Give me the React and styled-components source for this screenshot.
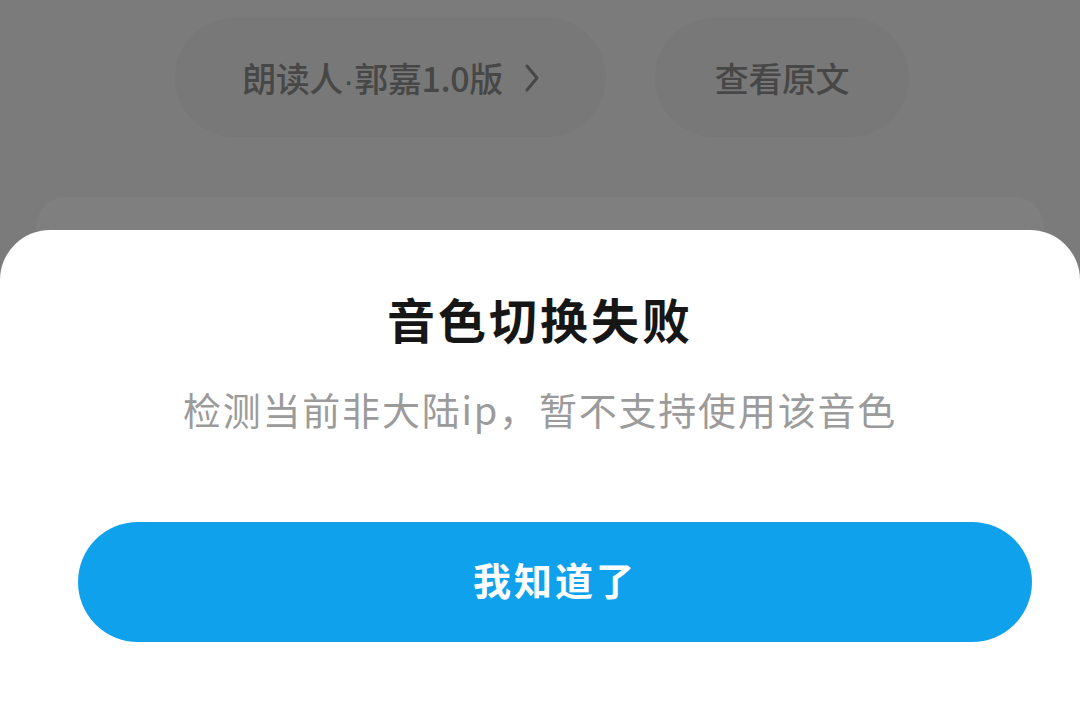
import React from 'react'
import styled, { createGlobalStyle } from 'styled-components'

const Global = createGlobalStyle`
  html, body { margin:0; padding:0; }
  body {
    font-family: "Noto Sans CJK SC", "Noto Sans", sans-serif;
    background:#7b7b7b;
  }
`

const Screen = styled.div`
  position:relative;
  width:1080px;
  height:714px;
  overflow:hidden;
  background:#7b7b7b;
`
const PillRow = styled.div`
  display:flex;
  justify-content:center;
  gap:49px;
  padding-top:18px;
  padding-left:4px;
`
const Pill = styled.div`
  display:flex;
  align-items:center;
  justify-content:center;
  gap:22px;
  width:${p => p.w}px;
  height:119px;
  border-radius:60px;
  background:#787878;
  color:#474747;
  font-size:34px;
  font-weight:500;
  letter-spacing:-0.4px;
`
const Dot = styled.span`
  font-family:"Liberation Sans", sans-serif;
  letter-spacing:0;
`
const Card = styled.div`
  margin:60px 36px 0;
  height:120px;
  border-radius:30px;
  background:#7f7f7f;
`
const Sheet = styled.div`
  position:absolute;
  left:0;
  right:0;
  top:230px;
  bottom:0;
  background:#fff;
  border-radius:50px 50px 0 0;
  display:flex;
  flex-direction:column;
  align-items:center;
`
const Title = styled.h2`
  margin:62px 0 0;
  font-size:48px;
  line-height:52px;
  font-weight:700;
  color:#161616;
  letter-spacing:3px;
`
const Message = styled.p`
  margin:43px 0 0;
  font-size:38px;
  line-height:44px;
  color:#9b9b9b;
  letter-spacing:1.8px;
`
const Button = styled.button`
  margin:91px 0 0 30px;
  padding:0 0 8px;
  width:954px;
  height:120px;
  border:none;
  border-radius:60px;
  background:#10a1ec;
  color:#fff;
  font-family:inherit;
  font-size:38px;
  font-weight:700;
  letter-spacing:3px;
`

const Chevron = () => (
  <svg width="14" height="28" viewBox="0 0 14 28">
    <path d="M2 2 L12 14 L2 26" fill="none" stroke="#474747" strokeWidth="3" strokeLinecap="round" strokeLinejoin="round" />
  </svg>
)

export default function App() {
  return (
    <Screen>
      <Global />
      <PillRow>
        <Pill w={431}>
          <span>朗读人<Dot>·</Dot>郭嘉1.0版</span>
          <Chevron />
        </Pill>
        <Pill w={254}>查看原文</Pill>
      </PillRow>
      <Card />
      <Sheet>
        <Title>音色切换失败</Title>
        <Message>检测当前非大陆ip，暂不支持使用该音色</Message>
        <Button>我知道了</Button>
      </Sheet>
    </Screen>
  )
}
